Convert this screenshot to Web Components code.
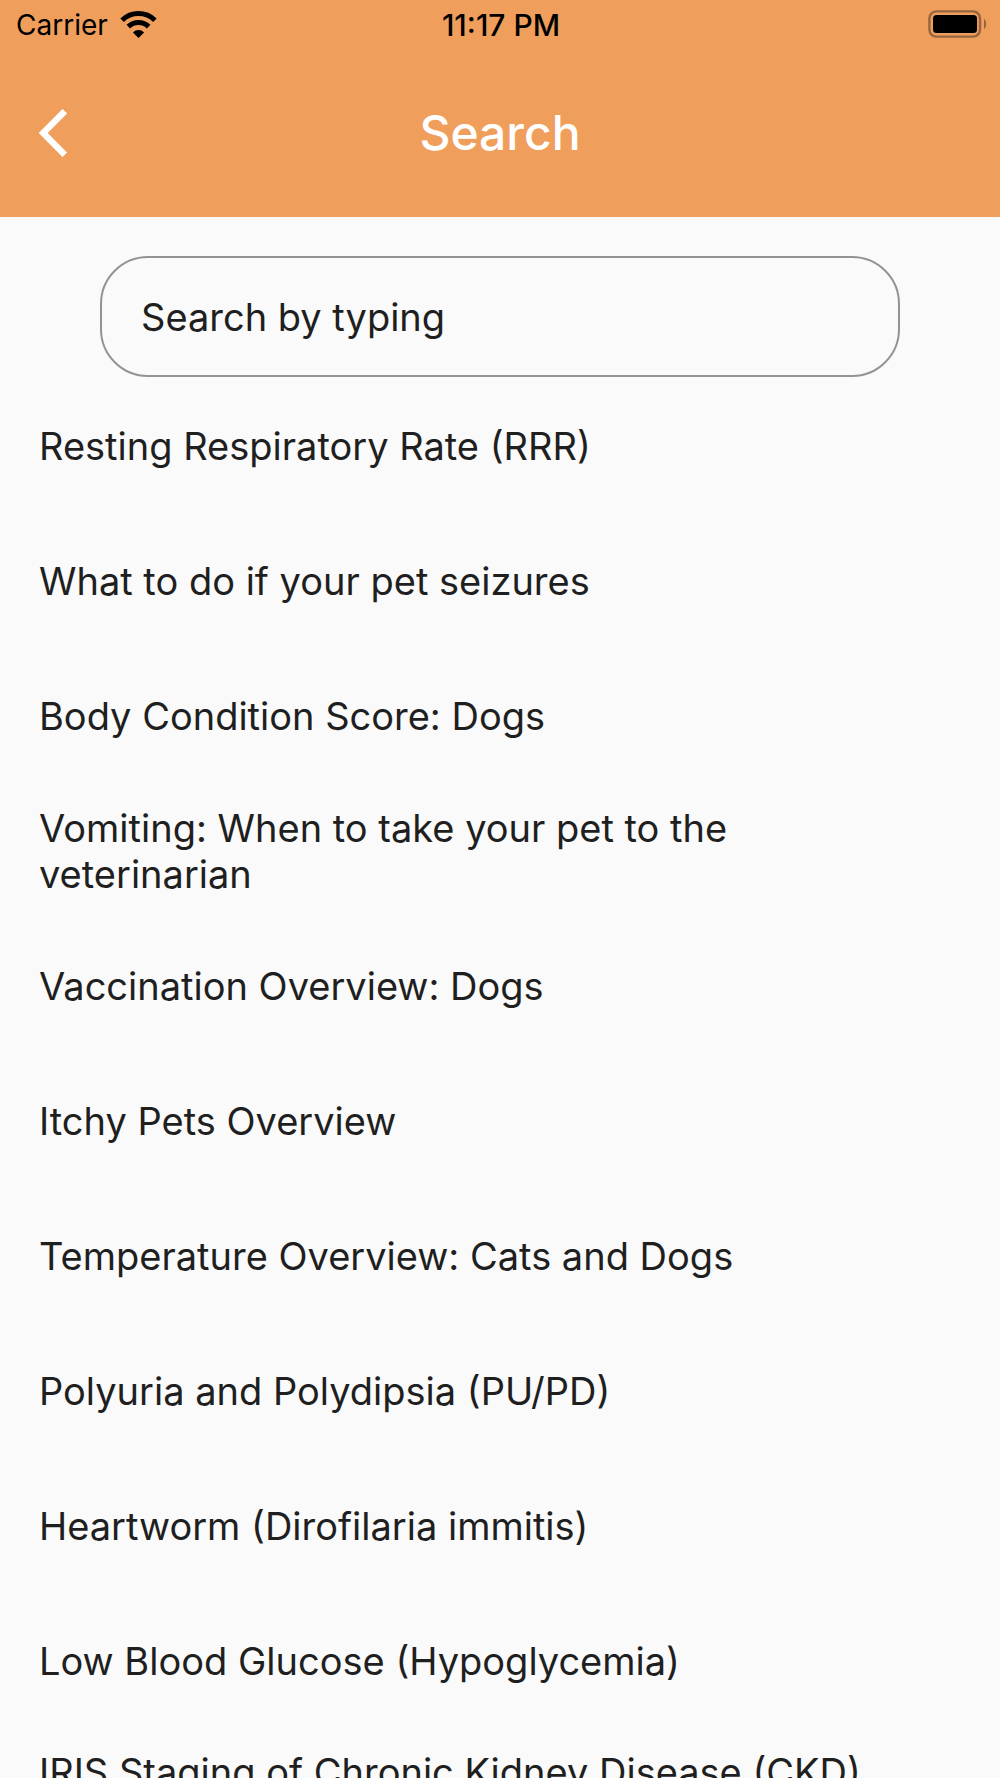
<!DOCTYPE html>
<html lang="en">
<head>
<meta charset="utf-8">
<meta name="viewport" content="width=device-width, initial-scale=1">
<title>Search</title>
<style>
  body {
    margin: 0;
    background: #fafafa;
    color: #1f1f1f;
    font-family: Inter, "Liberation Sans", sans-serif;
  }
</style>
</head>
<body>
<search-page>
  <status-bar slot="top" carrier="Carrier" time="11:17 PM"></status-bar>
  <app-bar slot="top">Search</app-bar>
  <search-field slot="search" placeholder="Search by typing"></search-field>
  <topic-item>Resting Respiratory Rate (RRR)</topic-item>
  <topic-item>What to do if your pet seizures</topic-item>
  <topic-item>Body Condition Score: Dogs</topic-item>
  <topic-item>Vomiting: When to take your pet to the veterinarian</topic-item>
  <topic-item>Vaccination Overview: Dogs</topic-item>
  <topic-item>Itchy Pets Overview</topic-item>
  <topic-item>Temperature Overview: Cats and Dogs</topic-item>
  <topic-item>Polyuria and Polydipsia (PU/PD)</topic-item>
  <topic-item>Heartworm (Dirofilaria immitis)</topic-item>
  <topic-item>Low Blood Glucose (Hypoglycemia)</topic-item>
  <topic-item top>IRIS Staging of Chronic Kidney Disease (CKD)</topic-item>
</search-page>

<script>
class SearchPage extends HTMLElement {
  constructor() {
    super();
    this.attachShadow({ mode: "open" }).innerHTML = `
      <style>
        :host {
          display: flex;
          flex-direction: column;
          height: 100vh;
        }
        header {
          background: #f09e5c;
        }
        .search {
          padding: 39px 10% 0;
        }
        main {
          flex: 1;
          min-height: 0;
          padding-top: 1px;
          overflow-y: auto;
          scrollbar-width: none;
        }
      </style>
      <header><slot name="top"></slot></header>
      <div class="search"><slot name="search"></slot></div>
      <main><slot></slot></main>
    `;
  }
}

class StatusBar extends HTMLElement {
  constructor() {
    super();
    this.attachShadow({ mode: "open" });
  }

  connectedCallback() {
    this.shadowRoot.innerHTML = `
      <style>
        :host {
          display: grid;
          grid-template-columns: 1fr auto 1fr;
          align-items: center;
          height: 48px;
          padding: 0 14px 0 16px;
          color: #000;
          font-size: 28px;
        }
        .left {
          display: flex;
          align-items: center;
          gap: 12px;
        }
        .left span, .time {
          line-height: 46px;
          padding-top: 2px;
        }
        .time {
          font-size: 30px;
          font-weight: 500;
        }
        .battery {
          justify-self: end;
        }
        svg {
          display: block;
        }
      </style>
      <div class="left">
        <span>${this.getAttribute("carrier")}</span>
        <svg width="37" height="28" viewBox="0 0 36 28" fill="none" stroke="#000" stroke-width="5">
          <path d="M1.6 10.2a23.4 23.4 0 0 1 32.8 0"/>
          <path d="M7.8 16.6a14.5 14.5 0 0 1 20.4 0"/>
          <path d="M18 28l-5.6-5.6a8 8 0 0 1 11.2 0z" fill="#000" stroke="none"/>
        </svg>
      </div>
      <span class="time">${this.getAttribute("time")}</span>
      <svg class="battery" width="58" height="28" viewBox="0 0 58 28">
        <rect x="1.4" y="1.4" width="50.6" height="25.2" rx="7" fill="none" stroke="#976540" stroke-width="2.4"/>
        <rect x="5" y="5" width="44" height="18" rx="3.5"/>
        <path d="M56 9c3 2 3 8 0 10z" fill="#976540"/>
      </svg>
    `;
  }
}

class AppBar extends HTMLElement {
  constructor() {
    super();
    this.attachShadow({ mode: "open" }).innerHTML = `
      <style>
        :host {
          display: grid;
          grid-template-columns: 1fr auto 1fr;
          align-items: center;
          height: 169px;
          padding: 0 38px;
          color: #fff;
        }
        button {
          justify-self: start;
          padding: 0;
          border: 0;
          background: none;
          color: inherit;
          cursor: pointer;
        }
        svg {
          display: block;
        }
        h1 {
          margin: 0;
          font-size: 48px;
          font-weight: 500;
          line-height: 58px;
        }
      </style>
      <button type="button" aria-label="Back">
        <svg width="30" height="48" viewBox="0 0 30 48" fill="none" stroke="currentColor" stroke-width="6.4">
          <path d="M26.8 2.2L5.2 24l21.6 21.8"/>
        </svg>
      </button>
      <h1><slot></slot></h1>
    `;
  }
}

class SearchField extends HTMLElement {
  constructor() {
    super();
    this.attachShadow({ mode: "open" });
  }

  connectedCallback() {
    const text = this.getAttribute("placeholder");
    this.shadowRoot.innerHTML = `
      <style>
        :host {
          display: block;
        }
        input {
          display: block;
          box-sizing: border-box;
          width: 100%;
          height: 121px;
          padding: 0 39px;
          border: 2px solid #939393;
          border-radius: 48px;
          background: transparent;
          color: inherit;
          font: inherit;
          font-size: 38px;
        }
        input::placeholder {
          color: inherit;
          opacity: 1;
        }
      </style>
      <input type="text" placeholder="${text}" aria-label="${text}">
    `;
  }
}

class TopicItem extends HTMLElement {
  constructor() {
    super();
    this.attachShadow({ mode: "open" }).innerHTML = `
      <style>
        :host {
          display: block;
        }
        a {
          display: flex;
          align-items: center;
          box-sizing: border-box;
          min-height: 135px;
          padding: 21px 60px 21px 39px;
          color: inherit;
          font-size: 38px;
          line-height: 46px;
          text-decoration: none;
        }
        :host([top]) a {
          align-items: flex-start;
        }
      </style>
      <a href="#"><span><slot></slot></span></a>
    `;
  }
}

customElements.define("search-page", SearchPage);
customElements.define("status-bar", StatusBar);
customElements.define("app-bar", AppBar);
customElements.define("search-field", SearchField);
customElements.define("topic-item", TopicItem);
</script>
</body>
</html>
